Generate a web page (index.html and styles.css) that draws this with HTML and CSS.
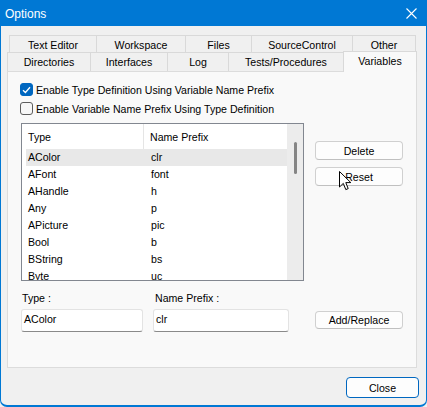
FILE: index.html
```html
<!DOCTYPE html>
<html lang="en">
<head>
    <meta charset="UTF-8">
    <title>Options</title>
    <link rel="stylesheet" href="styles.css">
</head>
<body>
    <div class="window">
        <div class="titlebar">
            <span class="title">Options</span>
            <svg class="close-x" width="11" height="11" viewBox="0 0 11 11">
                <path d="M0.5 0.5 L10.5 10.5 M10.5 0.5 L0.5 10.5" stroke="#fff" stroke-width="1.1" fill="none"/>
            </svg>
        </div>

        <div class="client">
            <div class="tabs">
                <div class="tab-row back-row">
                    <div class="tab tab-text-editor">Text Editor</div>
                    <div class="tab tab-workspace">Workspace</div>
                    <div class="tab tab-files">Files</div>
                    <div class="tab tab-source">SourceControl</div>
                    <div class="tab tab-other last">Other</div>
                </div>
                <div class="tab-row front-row">
                    <div class="tab tab-directories">Directories</div>
                    <div class="tab tab-interfaces">Interfaces</div>
                    <div class="tab tab-log">Log</div>
                    <div class="tab tab-tests">Tests/Procedures</div>
                    <div class="tab tab-variables selected">Variables</div>
                </div>
            </div>

            <div class="panel">
                <label class="check-row">
                    <span class="checkbox checked">
                        <svg width="9" height="8" viewBox="0 0 9 8"><path d="M1 4.2 L3.4 6.5 L8 1.3" stroke="#fff" stroke-width="1.3" fill="none"/></svg>
                    </span>
                    Enable Type Definition Using Variable Name Prefix
                </label>
                <label class="check-row">
                    <span class="checkbox"></span>
                    Enable Variable Name Prefix Using Type Definition
                </label>

                <div class="list-area">
                    <div class="listbox">
                        <div class="list-body">
                            <div class="list-head">
                                <span class="col-type">Type</span>
                                <span class="col-prefix">Name Prefix</span>
                            </div>
                            <div class="list-row selected"><span class="col-type">AColor</span><span class="col-prefix">clr</span></div>
                            <div class="list-row"><span class="col-type">AFont</span><span class="col-prefix">font</span></div>
                            <div class="list-row"><span class="col-type">AHandle</span><span class="col-prefix">h</span></div>
                            <div class="list-row"><span class="col-type">Any</span><span class="col-prefix">p</span></div>
                            <div class="list-row"><span class="col-type">APicture</span><span class="col-prefix">pic</span></div>
                            <div class="list-row"><span class="col-type">Bool</span><span class="col-prefix">b</span></div>
                            <div class="list-row"><span class="col-type">BString</span><span class="col-prefix">bs</span></div>
                            <div class="list-row"><span class="col-type">Byte</span><span class="col-prefix">uc</span></div>
                        </div>
                        <div class="scrollbar"><div class="thumb"></div></div>
                    </div>
                    <div class="side-buttons">
                        <button class="btn">Delete</button>
                        <button class="btn reset-btn">Reset</button>
                    </div>
                </div>

                <div class="edit-row">
                    <div class="field type-field">
                        <span class="field-label">Type :</span>
                        <div class="text-input">AColor</div>
                    </div>
                    <div class="field prefix-field">
                        <span class="field-label">Name Prefix :</span>
                        <div class="text-input">clr</div>
                    </div>
                    <button class="btn add-btn">Add/Replace</button>
                </div>
            </div>

            <div class="footer">
                <button class="btn default-btn">Close</button>
            </div>
        </div>

        <!-- mouse pointer over Reset -->
        <svg class="cursor" width="13" height="20" viewBox="0 0 13 20">
            <path d="M0.5 0.5 L0.5 16 L4.3 12.4 L6.8 18.6 L9.2 17.6 L6.8 11.6 L11.8 11.6 Z" fill="#fff" stroke="#000" stroke-width="1" stroke-linejoin="round"/>
        </svg>
    </div>
</body>
</html>
```

FILE: styles.css
```css
* {
    box-sizing: border-box;
}
body {
    margin: 0;
    background-color: #f0f0f0;
    font-family: 'Liberation Sans', Arial, sans-serif;
    font-size: 10.6px;
    color: #000;
}
.window {
    position: relative;
    width: 427px;
    height: 407px;
    border: 1px solid #0078d4;
    border-top: none;
    border-bottom-width: 2px;
    border-radius: 0 0 7px 7px;
    background-color: #f0f0f0;
    overflow: hidden;
    display: flex;
    flex-direction: column;
}
.titlebar {
    height: 26px;
    margin: 0 -1px;
    padding: 0 10px 0 5px;
    background-color: #0078d4;
    color: white;
    font-size: 12px;
    display: flex;
    align-items: center;
    justify-content: space-between;
}
.title {
    margin-top: 1px;
}
.close-x {
    display: block;
}
.client {
    flex-grow: 1;
    padding: 9px 0 0 6px;
    display: flex;
    flex-direction: column;
}

/* tabs */
.tabs {
    width: 410px;
}
.tab-row {
    display: flex;
}
.back-row {
    padding-left: 2px;
}
.tab {
    border-top: 1px solid #d9d9d9;
    border-left: 1px solid #d9d9d9;
    text-align: center;
    background-color: #f0f0f0;
}
.tab.last {
    border-right: 1px solid #d9d9d9;
}
.back-row .tab {
    height: 17px;
    line-height: 17px;
    padding-top: 1px;
}
.front-row .tab {
    height: 19px;
    line-height: 19px;
}
.tab-text-editor { width: 87px; }
.tab-workspace { width: 89px; }
.tab-files { width: 66px; }
.tab-source { width: 101px; }
.tab-other { width: 64px; }
.tab-directories { width: 83px; }
.tab-interfaces { width: 77px; }
.tab-log { width: 61px; }
.tab-tests { width: 115px; }
.front-row .tab.selected {
    width: 74px;
    height: 21px;
    margin-top: -1px;
    margin-bottom: -1px;
    line-height: 18px;
    border-right: 1px solid #d9d9d9;
    background-color: #f9f9f9;
    position: relative;
    z-index: 1;
}

/* page */
.panel {
    width: 410px;
    height: 297px;
    border: 1px solid #dcdcdc;
    background-color: #f9f9f9;
    padding: 8px 0 0 13px;
}
.check-row {
    display: flex;
    align-items: center;
    height: 19px;
    margin-left: -1px;
}
.checkbox {
    width: 13px;
    height: 13px;
    margin-right: 3px;
    border: 1px solid #5d5d5d;
    border-radius: 3px;
    background-color: #f7f7f7;
    display: flex;
    align-items: center;
    justify-content: center;
}
.checkbox.checked {
    border-color: #0067c0;
    background-color: #0067c0;
}
.list-area {
    display: flex;
    margin-top: 5px;
}
.listbox {
    width: 283px;
    height: 158px;
    border: 1px solid #828790;
    background-color: white;
    display: flex;
    overflow: hidden;
}
.list-body {
    flex-grow: 1;
    padding-left: 4px;
}
.list-head {
    height: 25px;
    display: flex;
    align-items: center;
}
.list-head .col-type {
    height: 25px;
    line-height: 26px;
    border-right: 1px solid #e5e5e5;
}
.list-row {
    height: 17px;
    line-height: 17px;
    display: flex;
}
.list-row.selected {
    background-color: #e8e8e8;
}
.col-type {
    width: 118px;
    padding-left: 2px;
}
.col-prefix {
    padding-left: 7px;
}
.list-head .col-prefix {
    padding-left: 6px;
}
.scrollbar {
    width: 16px;
    background-color: #ececec;
    padding: 18px 0 0 7px;
}
.thumb {
    width: 3px;
    height: 32px;
    border-radius: 2px;
    background-color: #858585;
}
.side-buttons {
    margin-left: 11px;
    padding-top: 18px;
    display: flex;
    flex-direction: column;
}
.btn {
    width: 88px;
    height: 19px;
    padding: 0;
    border: 1px solid #d0d0d0;
    border-bottom-color: #c0c0c0;
    border-radius: 4px;
    background-color: #fdfdfd;
    font-family: inherit;
    font-size: inherit;
    color: #000;
}
.reset-btn {
    margin-top: 7px;
}
.edit-row {
    display: flex;
    align-items: flex-end;
    margin-top: 9px;
}
.field {
    display: flex;
    flex-direction: column;
}
.field-label {
    height: 16px;
    line-height: 16px;
    margin-bottom: 3px;
}
.type-field {
    width: 122px;
    margin-right: 10px;
}
.type-field .field-label {
    padding-left: 1px;
}
.prefix-field {
    width: 136px;
    margin-right: 26px;
}
.prefix-field .field-label {
    padding-left: 2px;
}
.text-input {
    height: 23px;
    line-height: 19px;
    padding: 0 2px;
    border: 1px solid #e3e3e3;
    border-bottom-color: #8a8a8a;
    border-radius: 3px;
    background-color: white;
}
.add-btn {
    margin-bottom: 3px;
    height: 18px;
}
.footer {
    display: flex;
    justify-content: flex-end;
    padding: 9px 7px 0 0;
}
.default-btn {
    width: 73px;
    height: 21px;
    border: 1px solid #0067c0;
}
.cursor {
    position: absolute;
    left: 338px;
    top: 171px;
}
```
